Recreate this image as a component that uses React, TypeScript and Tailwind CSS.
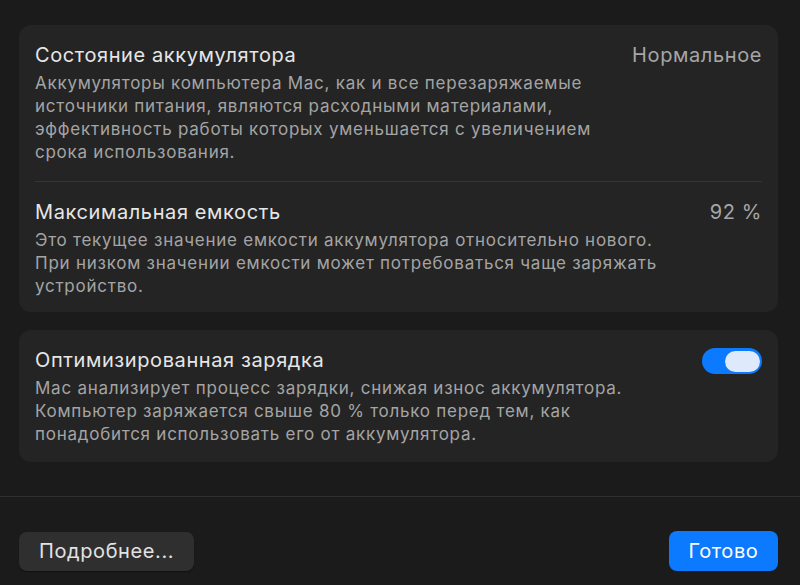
import React from "react";

const font = { fontFamily: "Inter, 'Noto Sans', sans-serif" };

function Row({
  title,
  value,
  text,
  toggle,
}: {
  title: string;
  value?: string;
  text: string[];
  toggle?: boolean;
}) {
  return (
    <div className="flex items-start justify-between gap-6">
      <div>
        <div className="text-[20px] leading-[26px] tracking-[0.6px] text-[#e6e6e6]">{title}</div>
        <div className="mt-[4px] text-[17px] leading-[23px] tracking-[0.75px] text-[#a4a4a4]">
          {text.map((t, i) => (
            <div key={i}>{t}</div>
          ))}
        </div>
      </div>
      {value && (
        <div className="text-[20px] leading-[26px] tracking-[0.6px] text-[#a6a6a6] whitespace-nowrap">{value}</div>
      )}
      {toggle && (
        <div className="mt-[1px] flex h-[26px] w-[60px] shrink-0 items-center justify-end rounded-full bg-[#0b7aff] pr-[2px]">
          <div className="h-[21px] w-[35px] rounded-full bg-[#dfe9fc]" />
        </div>
      )}
    </div>
  );
}

export default function App() {
  return (
    <div className="h-[585px] w-[800px] overflow-hidden bg-[#1b1b1b]" style={font}>
      <div className="ml-[19px] mr-[22px] pt-[25px]">
        <div className="rounded-[12px] bg-[#242424] px-[16px] pt-[17px] pb-[14px]">
          <div className="pb-[17px] border-b border-[#363636]">
            <Row
              title="Состояние аккумулятора"
              value="Нормальное"
              text={[
                "Аккумуляторы компьютера Mac, как и все перезаряжаемые",
                "источники питания, являются расходными материалами,",
                "эффективность работы которых уменьшается с увеличением",
                "срока использования.",
              ]}
            />
          </div>
          <div className="pt-[17px]">
            <Row
              title="Максимальная емкость"
              value="92 %"
              text={[
                "Это текущее значение емкости аккумулятора относительно нового.",
                "При низком значении емкости может потребоваться чаще заряжать",
                "устройство.",
              ]}
            />
          </div>
        </div>

        <div className="mt-[18px] rounded-[12px] bg-[#242424] px-[16px] pt-[17px] pb-[16px]">
          <Row
            title="Оптимизированная зарядка"
            toggle
            text={[
              "Mac анализирует процесс зарядки, снижая износ аккумулятора.",
              "Компьютер заряжается свыше 80 % только перед тем, как",
              "понадобится использовать его от аккумулятора.",
            ]}
          />
        </div>
      </div>

      <div className="mt-[34px] border-t border-[#303030]" />

      <div className="ml-[19px] mr-[22px] mt-[34px] flex items-center justify-between">
        <button className="h-[39px] rounded-[8px] bg-[#2f2f2f] px-[20px] text-[20px] tracking-[0.6px] text-[#e2e2e2] shadow-[0_1px_1px_rgba(0,0,0,0.4)]">
          Подробнее...
        </button>
        <button className="h-[40px] w-[109px] rounded-[8px] bg-[#0b7aff] text-[20px] tracking-[0.6px] text-white">
          Готово
        </button>
      </div>
    </div>
  );
}
